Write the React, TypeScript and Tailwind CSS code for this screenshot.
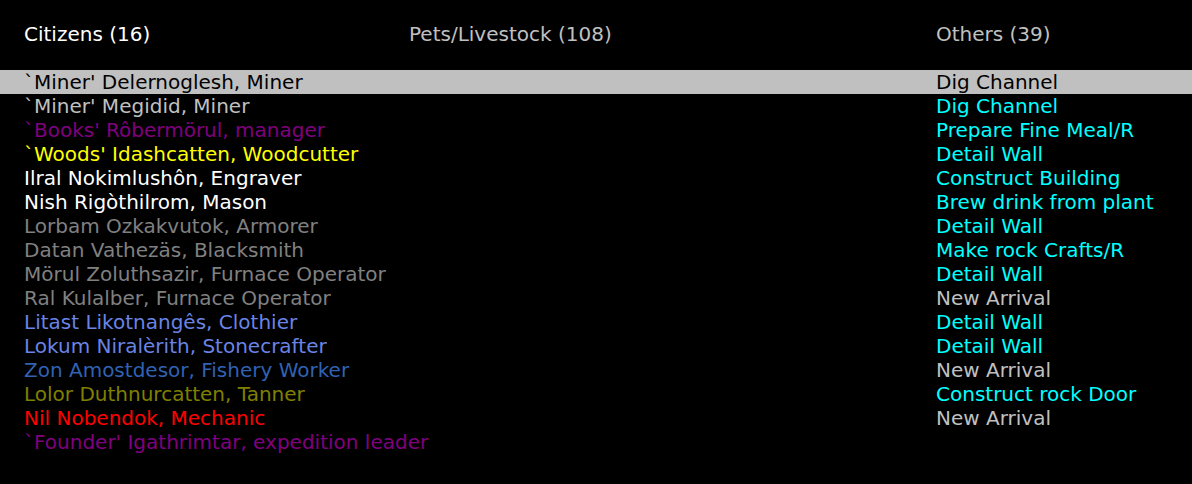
import React from "react";

const rows: { name: string; nc: string; job: string; jc: string }[] = [
  { name: "`Miner' Delernoglesh, Miner", nc: "text-black", job: "Dig Channel", jc: "text-black" },
  { name: "`Miner' Megidid, Miner", nc: "text-[#c0c0c0]", job: "Dig Channel", jc: "text-[#00ffff]" },
  { name: "`Books' Rôbermörul, manager", nc: "text-[#800080]", job: "Prepare Fine Meal/R", jc: "text-[#00ffff]" },
  { name: "`Woods' Idashcatten, Woodcutter", nc: "text-[#ffff00]", job: "Detail Wall", jc: "text-[#00ffff]" },
  { name: "Ilral Nokimlushôn, Engraver", nc: "text-white", job: "Construct Building", jc: "text-[#00ffff]" },
  { name: "Nish Rigòthilrom, Mason", nc: "text-white", job: "Brew drink from plant", jc: "text-[#00ffff]" },
  { name: "Lorbam Ozkakvutok, Armorer", nc: "text-[#808080]", job: "Detail Wall", jc: "text-[#00ffff]" },
  { name: "Datan Vathezäs, Blacksmith", nc: "text-[#808080]", job: "Make rock Crafts/R", jc: "text-[#00ffff]" },
  { name: "Mörul Zoluthsazir, Furnace Operator", nc: "text-[#808080]", job: "Detail Wall", jc: "text-[#00ffff]" },
  { name: "Ral Kulalber, Furnace Operator", nc: "text-[#808080]", job: "New Arrival", jc: "text-[#c0c0c0]" },
  { name: "Litast Likotnangês, Clothier", nc: "text-[#6a84e6]", job: "Detail Wall", jc: "text-[#00ffff]" },
  { name: "Lokum Niralèrith, Stonecrafter", nc: "text-[#6a84e6]", job: "Detail Wall", jc: "text-[#00ffff]" },
  { name: "Zon Amostdesor, Fishery Worker", nc: "text-[#3062b4]", job: "New Arrival", jc: "text-[#c0c0c0]" },
  { name: "Lolor Duthnurcatten, Tanner", nc: "text-[#808000]", job: "Construct rock Door", jc: "text-[#00ffff]" },
  { name: "Nil Nobendok, Mechanic", nc: "text-[#ff0000]", job: "New Arrival", jc: "text-[#c0c0c0]" },
  { name: "`Founder' Igathrimtar, expedition leader", nc: "text-[#800080]", job: "", jc: "text-[#c0c0c0]" },
];

export default function App() {
  return (
    <div
      className="w-[1192px] h-[484px] bg-black overflow-hidden text-[20px] leading-[24px] whitespace-nowrap"
      style={{ fontFamily: '"DejaVu Sans", sans-serif' }}
    >
      <div className="flex pt-[22px] pl-[24px] h-[46px]">
        <div className="w-[385px] text-white">Citizens (16)</div>
        <div className="w-[527px] text-[#c0c0c0]">Pets/Livestock (108)</div>
        <div className="text-[#c0c0c0]">Others (39)</div>
      </div>
      <div className="mt-[24px] flex flex-col">
        {rows.map((r, i) => (
          <div key={i} className={`flex h-[24px] pl-[24px] ${i === 0 ? "bg-[#c0c0c0]" : ""}`}>
            <div className={`w-[912px] ${r.nc}`}>{r.name}</div>
            <div className={r.jc}>{r.job}</div>
          </div>
        ))}
      </div>
    </div>
  );
}
